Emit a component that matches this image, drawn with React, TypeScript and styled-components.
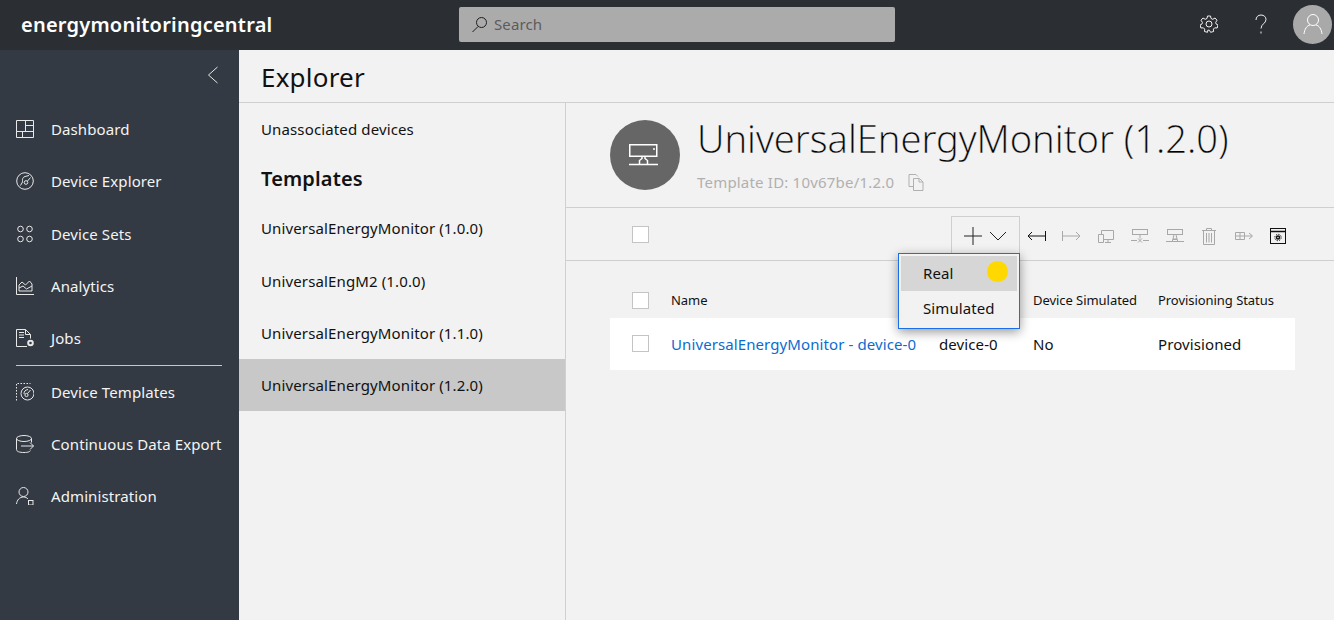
import React from "react";
import styled, { createGlobalStyle } from "styled-components";

const Global = createGlobalStyle`
  html, body { margin: 0; padding: 0; height: 100%; overflow: hidden; background: #f2f2f2; }
  * { box-sizing: border-box; }
  body { font-family: "Noto Sans", "Open Sans", sans-serif; color: #111; letter-spacing: .1px; }
`;

const Page = styled.div`display: flex; flex-direction: column; width: 1334px; height: 620px; overflow: hidden;`;
const TopBar = styled.header`display: flex; align-items: center; height: 50px; flex: none; background: #2b2f33; color: #fff; position: relative;`;
const Brand = styled.div`width: 459px; padding-left: 21px; font-size: 20px; letter-spacing: .22px; font-weight: 600; line-height: 50px; flex: none; margin-top: -1px;`;
const SearchBox = styled.div`display: flex; align-items: center; gap: 6px; width: 436px; height: 35px; background: #ababab; border-radius: 2px; padding: 0 0 1px 12px; color: #5c5c5c; font-size: 15px; margin-top: -1px;`;
const TopActions = styled.div`display: flex; align-items: center; margin-left: auto; padding-right: 2px;`;
const TopIcon = styled.div`display: flex; align-items: center; justify-content: center; width: 52px; height: 50px; margin-top: -2px;`;
const Avatar = styled.div`display: flex; align-items: center; justify-content: center; width: 39px; height: 39px; margin-left: 6px; margin-top: -2px; border-radius: 50%; background: #a9a9a9;`;

const Body = styled.div`display: flex; flex: 1; min-height: 0;`;
const Sidebar = styled.nav`width: 239px; flex: none; background: #333a43; color: #fff; display: flex; flex-direction: column;`;
const Collapse = styled.div`display: flex; justify-content: flex-end; height: 53px; padding: 16px 20px 0 0; flex: none;`;
const NavItem = styled.div<{ $extra?: boolean }>`display: flex; align-items: center; height: 52px; margin-bottom: ${(p) => (p.$extra ? 1 : 0)}px; padding-left: 16px; gap: 17px; font-size: 15px; flex: none; color: #f4f4f4;`;
const NavDivider = styled.div`height: 1px; background: #c8c8c8; margin: 1px 17px 0 16px; flex: none;`;

const Main = styled.main`flex: 1; display: flex; flex-direction: column; min-width: 0;`;
const PageTitle = styled.div`height: 53px; flex: none; padding-left: 22px; font-size: 26px; letter-spacing: .2px; line-height: 55px; border-bottom: 1px solid #cfcfcf; color: #111;`;
const Split = styled.div`flex: 1; display: flex; min-height: 0;`;
const ListPane = styled.aside`width: 327px; flex: none; border-right: 1px solid #d0d0d0; display: flex; flex-direction: column;`;
const ListItem = styled.div<{ $sel?: boolean; $extra?: boolean }>`display: flex; align-items: center; height: 52px; margin-bottom: ${(p) => (p.$extra ? 1 : 0)}px; flex: none; padding-left: 22px; font-size: 15px; letter-spacing: .13px; background: ${(p) => (p.$sel ? "#c8c8c8" : "transparent")};`;
const ListHead = styled.div`height: 47px; flex: none; padding-left: 22px; font-size: 20px; font-weight: 600; letter-spacing: .15px; line-height: 48px;`;

const Detail = styled.section`flex: 1; display: flex; flex-direction: column; min-width: 0; position: relative;`;
const DetailHead = styled.div`height: 105px; flex: none; display: flex; padding: 17px 0 0 44px; gap: 17px; border-bottom: 1px solid #cfcfcf;`;
const Circle = styled.div`width: 70px; height: 70px; border-radius: 50%; background: #666; display: flex; align-items: center; justify-content: center; flex: none; padding-right: 3px;`;
const HeadText = styled.div`display: flex; flex-direction: column; margin-top: -10px;`;
const BigTitle = styled.div`font-size: 38px; font-weight: 300; letter-spacing: 0; line-height: 56px; color: #000; -webkit-text-stroke: .3px #f2f2f2; white-space: nowrap;`;
const TemplateId = styled.div`display: flex; align-items: center; gap: 14px; font-size: 15px; letter-spacing: .2px; color: #b0b0b0; margin-top: 6px;`;

const Toolbar = styled.div`height: 53px; flex: none; display: flex; align-items: center; border-bottom: 1px solid #cfcfcf; padding-left: 66px;`;
const Check = styled.div<{ $up?: boolean }>`width: 17px; height: 17px; background: #fff; border: 1px solid #c4c4c4; flex: none; margin-top: ${(p) => (p.$up ? "-2px" : "0")};`;
const ToolActions = styled.div`display: flex; align-items: center; margin-left: 302px; margin-top: 2px;`;
const AddButton = styled.div`display: flex; align-items: center; justify-content: center; gap: 7px; width: 69px; height: 38px; margin-right: -.5px; border: 1px solid #cfcfcf; padding-top: 1px;`;
const ToolIcon = styled.div`display: flex; align-items: center; justify-content: center; width: 34.5px; height: 38px; flex: none; padding-top: 2px;`;

const TableWrap = styled.div`padding: 22px 39px 0 44px;`;
const Row = styled.div<{ $head?: boolean }>`display: grid; grid-template-columns: 39px 268px 94px 125px 1fr; align-items: center; height: ${(p) => (p.$head ? 35 : 52)}px; padding-left: 22px; background: ${(p) => (p.$head ? "transparent" : "#fff")}; font-size: ${(p) => (p.$head ? "13px" : "15px")};`;
const CellLink = styled.span`color: #0b6cd0; white-space: nowrap;`;
const Cell = styled.span`white-space: nowrap;`;
const HeadCell = styled.span`white-space: nowrap; margin-top: -2px; letter-spacing: -.05px;`;

const Menu = styled.div`position: absolute; left: 332px; top: 150px; width: 122px; height: 76px; background: #f2f2f2; border: 1px solid #1a6fe8; padding: 2px; box-shadow: 0 3px 10px rgba(0,0,0,.4); z-index: 2;`;
const MenuItem = styled.div<{ $active?: boolean }>`height: 35px; display: flex; align-items: center; padding: 0 0 2px 22px; font-size: 15px; background: ${(p) => (p.$active ? "#d6d6d6" : "transparent")};`;
const Dot = styled.div`position: absolute; left: 88px; top: 7px; width: 21px; height: 21px; border-radius: 50%; background: #ffd800;`;

const S = { fill: "none", stroke: "currentColor", strokeWidth: 1 } as const;
const Ic: React.FC<{ w?: number; h?: number; c?: string; children: React.ReactNode }> = ({ w = 18, h = 18, c = "#e8e8e8", children }) => (
  <svg width={w} height={h} viewBox={`0 0 ${w} ${h}`} style={{ color: c, flex: "none" }} {...S}>{children}</svg>
);

const navIcons: React.ReactNode[] = [
  <Ic><path d="M.5.5h17v17H.5zM.5 11.5h17M9.5.5v11M6.500 11.5v6M9.5 5.500h8" /></Ic>,
  <Ic><circle cx="9" cy="9" r="8.300" /><circle cx="10" cy="10.500" r="1.800" /><path d="M14.500 5.500L11.500 9M13 3.500L9 4.500C6 5.500 6.500 8 6.500 10L4.500 13.500" /></Ic>,
  <Ic><circle cx="4.500" cy="4" r="2.800" /><circle cx="13.500" cy="4" r="2.800" /><circle cx="4.500" cy="14" r="2.800" /><circle cx="13.500" cy="14" r="2.800" /></Ic>,
  <Ic><path d="M.5 0v17.500H18M3 14V8l3-3 3.500 3 4-4 2.500 3v7zM3 11l4-2 3.500 3 5.500-3" /></Ic>,
  <Ic><path d="M11 17.500H.5V.5h9l5 5v4M9.500.5v5h5M3 3.500h5M3 6h5M3 8.500h5" /><circle cx="14.500" cy="14" r="2.300" strokeWidth="2" /></Ic>,
  <Ic><path d="M.5 17.500V.5h14" strokeDasharray="1.500 1.500" /><circle cx="11.500" cy="10.500" r="6.500" /><circle cx="10.500" cy="12" r="1.600" /><path d="M14.500 7l-3 3.500M12 6.500C9 7 8 8.500 8 11" /></Ic>,
  <Ic><ellipse cx="8" cy="3.500" rx="7.500" ry="3" /><path d="M.5 3.500v11c0 2 3 3 7.500 3s6-1 6.500-2M15.500 3.500v4M5 11h12.500M14 7.500l3.500 3.500-3.500 3.500" /></Ic>,
  <Ic><circle cx="7.500" cy="5" r="4.500" /><path d="M.5 17c.5-4 3-7 7-7 2 0 3.500.8 4.500 2" /><rect x="12.500" y="13.500" width="4.500" height="4.500" /></Ic>,
];
const navNames = ["Dashboard", "Device Explorer", "Device Sets", "Analytics", "Jobs", "Device Templates", "Continuous Data Export", "Administration"];

const G = "#a8a8a8";

export default function App() {
  return (
    <Page>
      <Global />
      <TopBar>
        <Brand>energymonitoringcentral</Brand>
        <SearchBox>
          <Ic w={17} h={17} c="#1c1c1c"><circle cx="10.500" cy="6.500" r="5" /><path d="M7 10.500L1.500 16" /></Ic>
          Search
        </SearchBox>
        <TopActions>
          <TopIcon>
            <Ic w={18} h={18} c="#f0f0f0"><circle cx="9" cy="9" r="3" /><path d="M7.500 1h3l.5 2.500 1.800.8L15 3l2 2.200-1.300 2.200.4 1.600 1.900 1-.8 3-2.500-.2-1.300 1.300.2 2.400-3 .8-1.200-2.100h-1.600L7.500 17.300l-3-.8.200-2.400-1.300-1.300-2.500.2-.8-3 1.900-1 .4-1.600L1 5.200 3 3l2.200 1.300 1.800-.8z" /></Ic>
          </TopIcon>
          <TopIcon>
            <Ic w={14} h={20} c="#f0f0f0"><path d="M2 6c0-3 2-5 5-5s5 2 5 4.500c0 4-5 4.500-5 9" /><path d="M7 17.500v2" /></Ic>
          </TopIcon>
          <Avatar>
            <Ic w={20} h={22} c="#fff"><circle cx="10" cy="7" r="5.500" /><path d="M1 21c.5-5 3-8.500 6-9M19 21c-.5-5-3-8.500-6-9" /></Ic>
          </Avatar>
        </TopActions>
      </TopBar>
      <Body>
        <Sidebar>
          <Collapse>
            <Ic w={12} h={18} c="#e8e8e8"><path d="M10.500 1L1.500 9l9 8" /></Ic>
          </Collapse>
          {navNames.map((n, i) => (
            <React.Fragment key={n}>
              {i === 5 && <NavDivider />}
              <NavItem $extra={i === 1}>{navIcons[i]}{n}</NavItem>
            </React.Fragment>
          ))}
        </Sidebar>
        <Main>
          <PageTitle>Explorer</PageTitle>
          <Split>
            <ListPane>
              <ListItem>Unassociated devices</ListItem>
              <ListHead>Templates</ListHead>
              <ListItem $extra>UniversalEnergyMonitor (1.0.0)</ListItem>
              <ListItem>UniversalEngM2 (1.0.0)</ListItem>
              <ListItem>UniversalEnergyMonitor (1.1.0)</ListItem>
              <ListItem $sel>UniversalEnergyMonitor (1.2.0)</ListItem>
            </ListPane>
            <Detail>
              <DetailHead>
                <Circle>
                  <Ic w={30} h={22} c="#fff">
                    <g strokeWidth="1.500"><rect x=".75" y=".75" width="27" height="11.500" /><path d="M24 5h2" /><path d="M13 12.500v2l-2.500 2v4h8v-4l-2.500-2v-2M0 20.500h29" /></g>
                  </Ic>
                </Circle>
                <HeadText>
                  <BigTitle>UniversalEnergyMonitor (1.2.0)</BigTitle>
                  <TemplateId>
                    Template ID: 10v67be/1.2.0
                    <Ic w={16} h={17} c="#b0b0b0"><path d="M1 .5h7l2 2M1 .5v12h4" /><path d="M5.500 4.500h6l3.500 3.500v8.500H5.500zM11 4.500V8h4" /></Ic>
                  </TemplateId>
                </HeadText>
              </DetailHead>
              <Toolbar>
                <Check />
                <ToolActions>
                  <AddButton>
                    <Ic w={18} h={18} c="#222"><path d="M9 0v18M0 9h18" /></Ic>
                    <Ic w={18} h={10} c="#222"><path d="M1 1l8 8 8-8" /></Ic>
                  </AddButton>
                  <ToolIcon><Ic w={19} h={10} c="#111"><path d="M18.500 0v10M18 5H1M5 1L1 5l4 4" /></Ic></ToolIcon>
                  <ToolIcon><Ic w={19} h={10} c={G}><path d="M.5 0v10M1 5h17M14 1l4 4-4 4" /></Ic></ToolIcon>
                  <ToolIcon><Ic w={16} h={13} c={G}><path d="M3.500 4V.5h12v9H5.500M.5 4.500h5v8h-5zM10 9.500v2.500M7 12.500h6" /></Ic></ToolIcon>
                  <ToolIcon><Ic w={18} h={15} c={G}><rect x="1.500" y=".5" width="15" height="5" /><path d="M9 5.500v4M0 11.500h6M12 11.500h6M7 9.500l4 4M11 9.500l-4 4" /></Ic></ToolIcon>
                  <ToolIcon><Ic w={18} h={15} c={G}><rect x="1.500" y=".5" width="15" height="5" /><path d="M8 5.500L7 10h4l-1-4.500M0 12.500h18M6.500 10.500h5v2h-5z" /></Ic></ToolIcon>
                  <ToolIcon><Ic w={14} h={17} c={G}><path d="M0 2.500h14M4.500 2.500V.5h5v2M1.500 2.500v14h11v-14M4.500 5v9.500M7 5v9.500M9.500 5v9.500" /></Ic></ToolIcon>
                  <ToolIcon><Ic w={18} h={10} c={G}><path d="M.5 1.500h9v7h-9zM5 1.500v7M.5 5h9M10 5h7M14 2l3.500 3L14 8" /></Ic></ToolIcon>
                  <ToolIcon><Ic w={16} h={16} c="#111"><rect x=".5" y=".5" width="15" height="15" /><path d="M.5 3.500h15" strokeWidth="1.500" /><circle cx="8" cy="9.500" r="1.500" strokeWidth="1.500" /><circle cx="8" cy="9.500" r="3.200" strokeDasharray="1.300 1.200" /></Ic></ToolIcon>
                </ToolActions>
              </Toolbar>
              <Menu>
                <MenuItem $active>Real</MenuItem>
                <MenuItem>Simulated</MenuItem>
                <Dot />
              </Menu>
              <TableWrap>
                <Row $head>
                  <Check />
                  <HeadCell>Name</HeadCell>
                  <Cell />
                  <HeadCell>Device Simulated</HeadCell>
                  <HeadCell>Provisioning Status</HeadCell>
                </Row>
                <Row>
                  <Check $up />
                  <CellLink>UniversalEnergyMonitor - device-0</CellLink>
                  <Cell>device-0</Cell>
                  <Cell>No</Cell>
                  <Cell>Provisioned</Cell>
                </Row>
              </TableWrap>
            </Detail>
          </Split>
        </Main>
      </Body>
    </Page>
  );
}
